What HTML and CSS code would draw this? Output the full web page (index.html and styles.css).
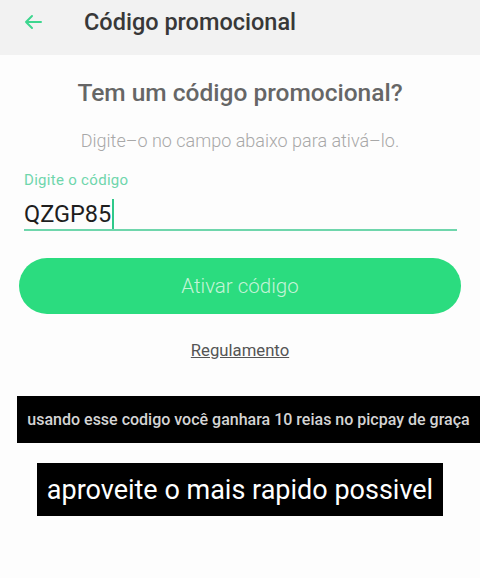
FILE: index.html
```html
<!DOCTYPE html>
<html lang="pt-BR">
<head>
  <meta charset="UTF-8" />
  <meta name="viewport" content="width=device-width, initial-scale=1.0"/>
  <title>Código promocional</title>
  <link rel="stylesheet" href="styles.css">
</head>
<body>
  <header class="topbar">
    <button class="back" aria-label="Voltar">
      <svg width="20" height="16" viewBox="0 0 20 16" fill="none" stroke="currentColor" stroke-width="2" stroke-linecap="round" stroke-linejoin="round">
        <path d="M18 8H3M9 2L3 8l6 6"/>
      </svg>
    </button>
    <h1>Código promocional</h1>
  </header>

  <main class="content">
    <h2>Tem um código promocional?</h2>
    <p class="hint">Digite–o no campo abaixo para ativá–lo.</p>

    <label class="field">
      <span class="field-label">Digite o código</span>
      <span class="field-value">QZGP85<span class="caret"></span></span>
    </label>

    <button class="activate">Ativar código</button>

    <a class="rules" href="#">Regulamento</a>

    <div class="caption caption-small">usando esse codigo você ganhara 10 reias no picpay de graça</div>
    <div class="caption caption-big">aproveite o mais rapido possivel</div>
  </main>
</body>
</html>
```

FILE: styles.css
```css
:root {
  --green: #2bdc7f;
  --green-soft: #6fd6ac;
  --text: #333;
}

* {
  box-sizing: border-box;
}

body {
  margin: 0;
  font-family: Roboto, 'Noto Sans', sans-serif;
  background: #fdfdfd;
  color: var(--text);
}

.topbar {
  display: flex;
  align-items: flex-start;
  height: 55px;
  padding-top: 8px;
  background: #f2f2f2;
}

.back {
  width: 84px;
  height: 28px;
  padding: 0 0 0 23px;
  border: none;
  background: none;
  color: #3ed68f;
  display: flex;
  align-items: center;
}

.topbar h1 {
  margin: 0;
  font-size: 23.5px;
  line-height: 28px;
  font-weight: 500;
  color: #383838;
}

.content {
  display: flex;
  flex-direction: column;
  align-items: center;
  padding-top: 24px;
}

.content h2 {
  margin: 0;
  font-size: 24.5px;
  line-height: 28px;
  font-weight: 500;
  color: #666;
}

.hint {
  margin: 24px 0 0;
  font-size: 18px;
  line-height: 20px;
  font-weight: 300;
  color: #a8a8a8;
}

.field {
  align-self: stretch;
  display: flex;
  flex-direction: column;
  margin: 21px 23px 0 24px;
  border-bottom: 2px solid var(--green-soft);
}

.field-label {
  font-size: 15px;
  line-height: 16px;
  letter-spacing: 0.3px;
  color: var(--green-soft);
}

.field-value {
  display: flex;
  align-items: center;
  height: 31px;
  margin-top: 10px;
  font-size: 23.5px;
  line-height: 28px;
  color: #1e1e1e;
}

.caret {
  width: 2px;
  height: 30px;
  margin-left: 1px;
  background: #2fc98a;
}

.activate {
  align-self: stretch;
  margin: 27px 19px 0;
  height: 56px;
  border: none;
  border-radius: 28px;
  background: var(--green);
  color: #c4f4d8;
  font-family: inherit;
  font-size: 20.5px;
  font-weight: 300;
}

.rules {
  margin-top: 27px;
  font-size: 16.7px;
  line-height: 20px;
  color: #555;
  text-decoration: underline;
}

.caption {
  background: #000;
  text-align: center;
}

.caption-small {
  align-self: stretch;
  margin: 35px 0 0 17px;
  height: 47px;
  display: flex;
  align-items: center;
  justify-content: center;
  font-size: 16px;
  font-weight: 500;
  color: #d4d4d4;
}

.caption-big {
  margin-top: 20px;
  width: 406px;
  height: 53px;
  display: flex;
  align-items: center;
  justify-content: center;
  font-size: 27px;
  color: #fff;
}
```
